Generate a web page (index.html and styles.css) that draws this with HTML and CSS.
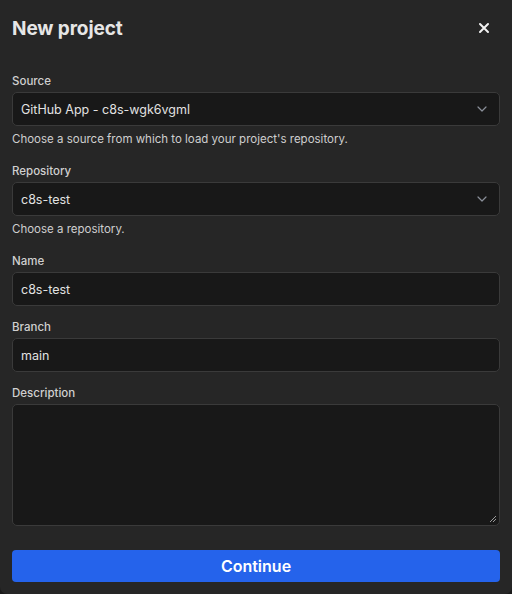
FILE: index.html
```html
<!DOCTYPE html>
<html>
<head>
<meta charset="utf-8">
<link rel="stylesheet" href="styles.css">
</head>
<body>
<div class="dialog">
  <div class="header">
    <h1 class="title">New project</h1>
    <button class="close" aria-label="Close">
      <svg width="12" height="12" viewBox="0 0 12 12"><path d="M2 2L10 10M10 2L2 10" stroke="#f2f2f2" stroke-width="2" stroke-linecap="round"/></svg>
    </button>
  </div>
  <form class="form">
    <div class="field">
      <label class="label">Source</label>
      <div class="control select">
        <span>GitHub App - c8s-wgk6vgml</span>
        <svg class="chev" width="10" height="6" viewBox="0 0 10 6"><path d="M1 1L5 5L9 1" fill="none" stroke="#8a8f99" stroke-width="1.2" stroke-linecap="round" stroke-linejoin="round"/></svg>
      </div>
      <p class="help">Choose a source from which to load your project's repository.</p>
    </div>
    <div class="field">
      <label class="label">Repository</label>
      <div class="control select">
        <span>c8s-test</span>
        <svg class="chev" width="10" height="6" viewBox="0 0 10 6"><path d="M1 1L5 5L9 1" fill="none" stroke="#8a8f99" stroke-width="1.2" stroke-linecap="round" stroke-linejoin="round"/></svg>
      </div>
      <p class="help">Choose a repository.</p>
    </div>
    <div class="field">
      <label class="label">Name</label>
      <div class="control"><span>c8s-test</span></div>
    </div>
    <div class="field">
      <label class="label">Branch</label>
      <div class="control"><span>main</span></div>
    </div>
    <div class="field">
      <label class="label">Description</label>
      <div class="control textarea">
        <svg class="grip" width="8" height="8" viewBox="0 0 8 8"><path d="M7 1L1 7M7 4L4 7" stroke="#9a9a9a" stroke-width="1"/></svg>
      </div>
    </div>
    <button type="button" class="submit">Continue</button>
  </form>
</div>
</body>
</html>
```
FILE: styles.css
```css
html, body {
  margin: 0;
  padding: 0;
  background: #1a1a1a;
}
body {
  font-family: Inter, "Noto Sans", sans-serif;
  width: 512px;
  height: 594px;
}
.dialog {
  box-sizing: border-box;
  width: 512px;
  height: 594px;
  background: #262626;
  border-radius: 0 0 7px 7px;
  padding: 0 12px;
}
.header {
  display: flex;
  align-items: center;
  justify-content: space-between;
  height: 56px;
}
.title {
  margin: 0;
  font-size: 19px;
  font-weight: 700;
  color: #e6e6e6;
  letter-spacing: -0.1px;
}
.close {
  background: none;
  border: 0;
  padding: 0;
  width: 16px;
  height: 16px;
  display: flex;
  align-items: center;
  justify-content: center;
  margin-right: 8px;
}
.form {
  display: flex;
  flex-direction: column;
  margin-top: 17px;
}
.field {
  display: flex;
  flex-direction: column;
  margin-bottom: 13px;
}
.label {
  font-size: 11.5px;
  font-weight: 500;
  color: #d0d0d0;
  line-height: 16px;
  margin-bottom: 3px;
}
.control {
  box-sizing: border-box;
  height: 34px;
  background: #181818;
  border: 1px solid #3a3a3a;
  border-radius: 5px;
  display: flex;
  align-items: center;
  padding: 0 8px;
  font-size: 12.5px;
  color: #e2e2e2;
}
.select {
  justify-content: space-between;
}
.chev {
  margin-right: 4px;
}
.help {
  margin: 5px 0 3px;
  font-size: 11.5px;
  color: #cfcfcf;
  line-height: 16px;
}
.textarea {
  height: 122px;
  align-items: flex-end;
  justify-content: flex-end;
  padding: 0 2px 2px 0;
}
.grip {
  display: block;
}
.submit {
  margin-top: 11px;
  height: 32px;
  border: 0;
  border-radius: 4px;
  background: #2563eb;
  color: #ffffff;
  font-family: Inter, "Noto Sans", sans-serif;
  font-size: 16px;
  font-weight: 600;
}
```
